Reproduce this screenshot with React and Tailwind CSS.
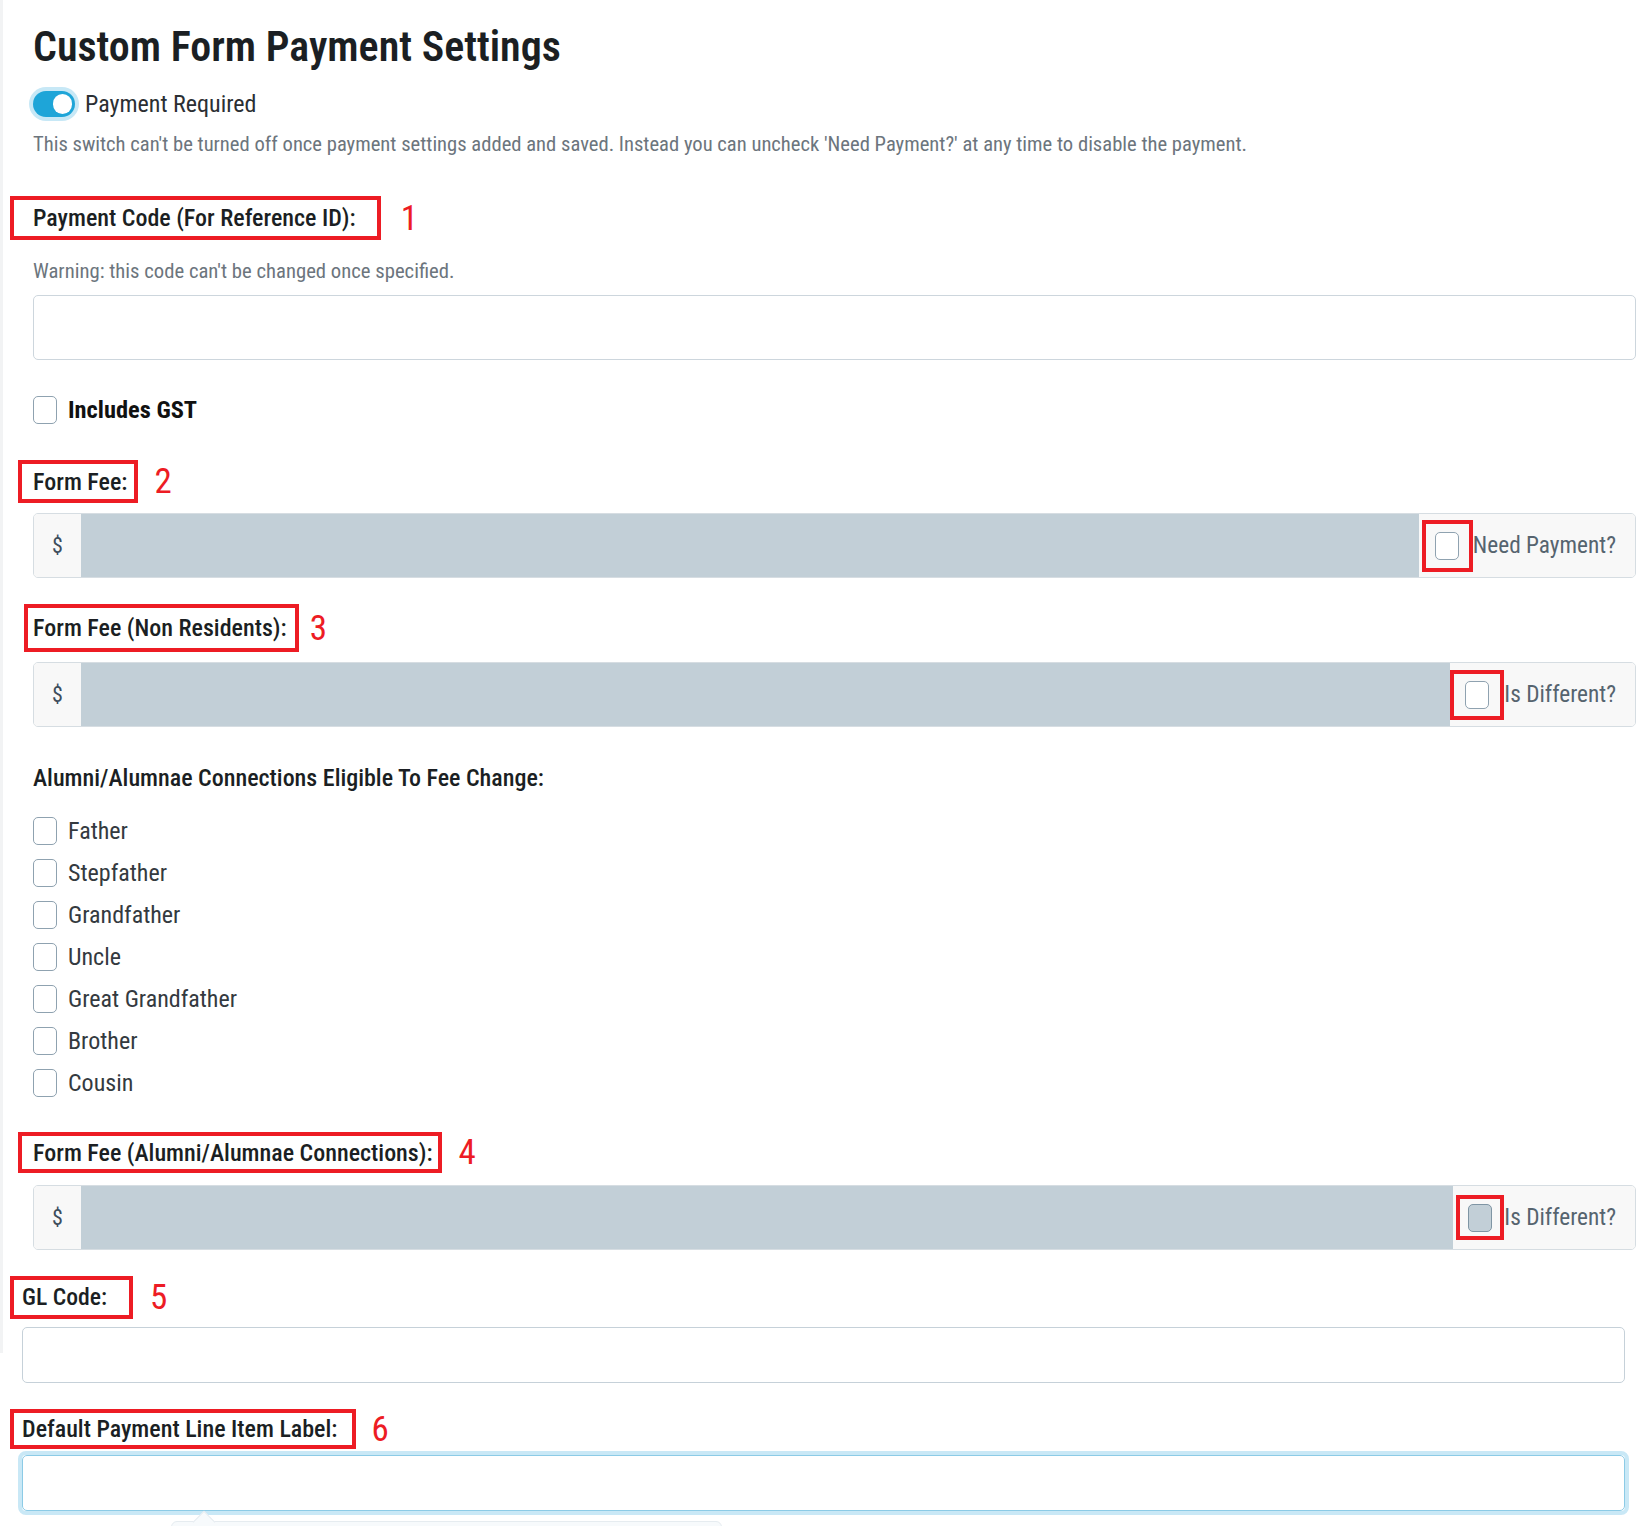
import React from 'react';

const relations = ['Father', 'Stepfather', 'Grandfather', 'Uncle', 'Great Grandfather', 'Brother', 'Cousin'];

function Check({ filled }) {
  return (
    <input
      type="checkbox"
      className={
        filled
          ? 'appearance-none shrink-0 w-[24px] h-[28px] rounded-[5px] border border-[#7f95a4] bg-[#c2cfd7]'
          : 'appearance-none shrink-0 w-[24px] h-[28px] rounded-[5px] border border-[#8fa2b0] bg-white'
      }
    />
  );
}

function Num({ n, gap }) {
  return <span className={`${gap} text-[35px] leading-none text-[#ed1c24]`}>{n}</span>;
}

function FeeGroup({ label, boxClass, padClass, filled }) {
  return (
    <div className="ml-[30px] mr-[10px] h-[65px] flex rounded-[5px] border border-[#d6dde2] overflow-hidden">
      <div className="w-[47px] shrink-0 bg-[#f8f8f8] flex items-center justify-center text-[22px] text-[#3d4d5c]">$</div>
      <div className="flex-1 bg-[#c2cfd7]" />
      <div className={`${padClass} pr-[19px] shrink-0 bg-[#f8f8f8] flex items-center`}>
        <div className={`${boxClass} border-4 border-[#ed1c24] flex items-center justify-center`}>
          <Check filled={filled} />
        </div>
        <span className="text-[23.3px] text-[#56646f]">{label}</span>
      </div>
    </div>
  );
}

export default function App() {
  return (
    <div className="flex bg-white text-[#212529]" style={{ fontFamily: '"Roboto Condensed", "Liberation Sans", sans-serif' }}>
      <div className="w-[3px] h-[1353px] shrink-0 bg-[#f2f3f4]" />
      <div className="flex-1 min-w-0 flex flex-col">
        <h1 className="ml-[30px] mt-[22px] text-[42px] leading-[49px] font-semibold text-[#1b1f23]">Custom Form Payment Settings</h1>

        {/* switch */}
        <div className="ml-[30px] mt-[18px] h-[30px] flex items-center gap-[10px]">
          <span className="w-[42px] h-[26px] rounded-full bg-[#1ea5d8] shadow-[0_0_0_4px_#c7e8f6] flex items-center justify-end pr-[3px]">
            <span className="w-[19px] h-[20px] rounded-full bg-white" />
          </span>
          <span className="text-[24px] text-[#2b2f33]">Payment Required</span>
        </div>
        <p className="ml-[30px] mt-[11px] text-[20.6px] leading-[28px] text-[#6c757d]">
          This switch can't be turned off once payment settings added and saved. Instead you can uncheck 'Need Payment?' at any time to disable the payment.
        </p>

        {/* 1 */}
        <div className="mt-[38px] flex items-center">
          <div className="ml-[7px] h-[44px] pl-[19px] pr-[21px] border-4 border-[#ed1c24] flex items-center">
            <span className="text-[24px] font-medium text-[#1b1f23]">Payment Code (For Reference ID):</span>
          </div>
          <Num n="1" gap="ml-[20px]" />
        </div>
        <p className="ml-[30px] mt-[17px] text-[20.7px] leading-[28px] text-[#6c757d]">Warning: this code can't be changed once specified.</p>
        <input className="ml-[30px] mr-[10px] mt-[10px] h-[65px] rounded-[5px] border border-[#cdd6dd] bg-white" />

        <label className="ml-[30px] mt-[35px] h-[30px] flex items-center gap-[11px]">
          <Check />
          <span className="text-[24.4px] font-bold text-[#111]">Includes GST</span>
        </label>

        {/* 2 */}
        <div className="mt-[35px] flex items-center">
          <div className="ml-[15px] h-[43px] pl-[11px] pr-[7px] border-4 border-[#ed1c24] flex items-center">
            <span className="text-[24px] font-medium text-[#1b1f23]">Form Fee:</span>
          </div>
          <Num n="2" gap="ml-[16px]" />
        </div>
        <div className="mt-[10px]">
          <FeeGroup label="Need Payment?" boxClass="w-[51px] h-[52px]" padClass="pl-[3px]" />
        </div>

        {/* 3 */}
        <div className="mt-[26px] flex items-center">
          <div className="ml-[21px] h-[48px] pl-[5px] pr-[8px] border-4 border-[#ed1c24] flex items-center">
            <span className="text-[24px] font-medium text-[#1b1f23]">Form Fee (Non Residents):</span>
          </div>
          <Num n="3" gap="ml-[11px]" />
        </div>
        <div className="mt-[10px]">
          <FeeGroup label="Is Different?" boxClass="w-[54px] h-[50px]" padClass="pl-0" />
        </div>

        <div className="ml-[30px] mt-[37px] text-[24px] leading-[28px] font-medium text-[#1b1f23]">Alumni/Alumnae Connections Eligible To Fee Change:</div>
        <div className="mt-[18px] flex flex-col">
          {relations.map((r) => (
            <label key={r} className="ml-[30px] h-[42px] flex items-center gap-[11px]">
              <Check />
              <span className="text-[24px] text-[#343a40]">{r}</span>
            </label>
          ))}
        </div>

        {/* 4 */}
        <div className="mt-[28px] flex items-center">
          <div className="ml-[15px] h-[41px] pl-[11px] pr-[5px] border-4 border-[#ed1c24] flex items-center">
            <span className="text-[24px] font-medium text-[#1b1f23]">Form Fee (Alumni/Alumnae Connections):</span>
          </div>
          <Num n="4" gap="ml-[17px]" />
        </div>
        <div className="mt-[12px]">
          <FeeGroup label="Is Different?" boxClass="w-[48px] h-[45px]" padClass="pl-[3px]" filled />
        </div>

        {/* 5 */}
        <div className="mt-[26px] flex items-center">
          <div className="ml-[7px] h-[43px] pl-[8px] pr-[22px] border-4 border-[#ed1c24] flex items-center">
            <span className="text-[23.7px] font-medium text-[#1b1f23]">GL Code:</span>
          </div>
          <Num n="5" gap="ml-[17px]" />
        </div>
        <input className="ml-[19px] mr-[21px] mt-[8px] h-[56px] rounded-[5px] border border-[#c6d1d9] bg-white" />

        {/* 6 */}
        <div className="mt-[26px] flex items-center">
          <div className="ml-[7px] h-[40px] pl-[8px] pr-[15px] border-4 border-[#ed1c24] flex items-center">
            <span className="text-[24px] font-medium text-[#1b1f23]">Default Payment Line Item Label:</span>
          </div>
          <Num n="6" gap="ml-[15px]" />
        </div>
        <div className="relative ml-[15px] mr-[17px] mt-[2px]">
          <div className="rounded-[8px] border-4 border-[#c9e8f6]">
            <input className="block w-full h-[56px] rounded-[5px] border border-[#8ccbe6] bg-white outline-none" />
          </div>
          <div className="absolute left-[153px] top-[70px] w-[551px] h-[40px] rounded-[6px] border border-[#e6ecf0] bg-[#f7fafc]">
            <span className="absolute left-[24px] -top-[8px] w-[16px] h-[16px] rotate-45 border-l border-t border-[#e6ecf0] bg-[#f7fafc]" />
          </div>
        </div>
        <div className="h-[60px]" />
      </div>
    </div>
  );
}
